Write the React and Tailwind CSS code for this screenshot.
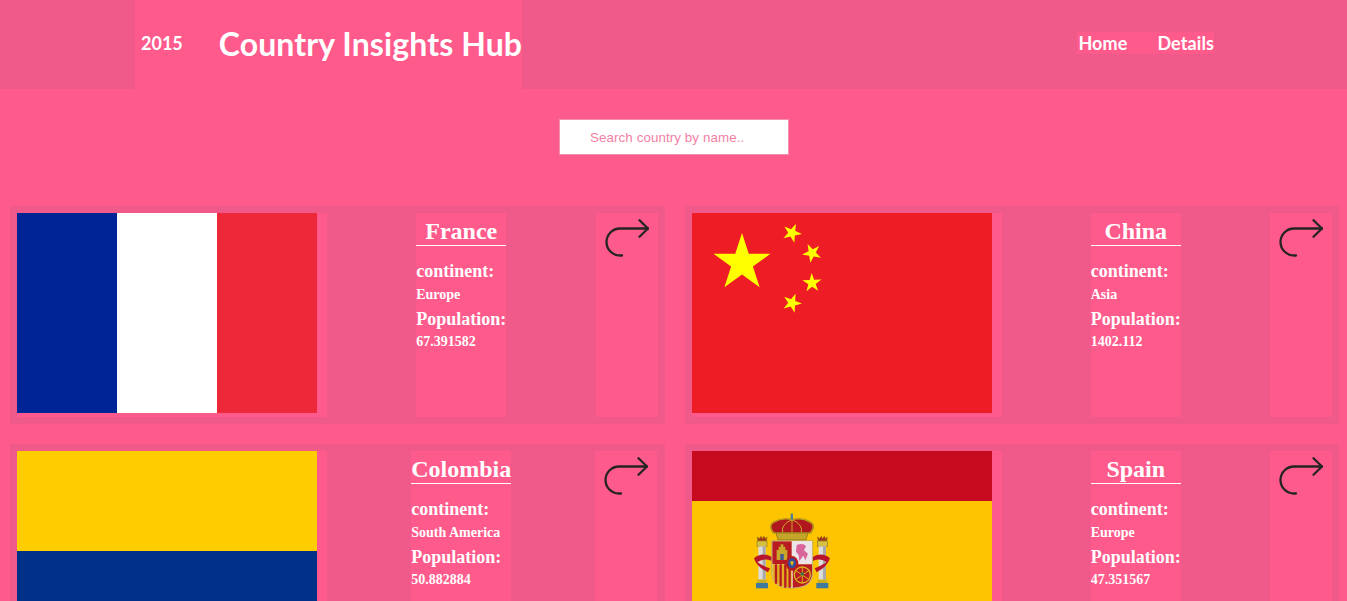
import React from 'react';

const starPoints = (cx, cy, r, rot) => {
  const pts = [];
  for (let i = 0; i < 10; i++) {
    const rad = i % 2 === 0 ? r : r * 0.382;
    const a = rot + (i * Math.PI) / 5;
    pts.push(`${(cx + rad * Math.cos(a)).toFixed(2)},${(cy + rad * Math.sin(a)).toFixed(2)}`);
  }
  return pts.join(' ');
};

const FranceFlag = () => (
  <svg viewBox="0 0 300 200" className="block w-[300px] h-[200px]">
    <rect width="100" height="200" fill="#002395" />
    <rect x="100" width="100" height="200" fill="#ffffff" />
    <rect x="200" width="100" height="200" fill="#ED2939" />
  </svg>
);

const ChinaFlag = () => {
  const small = [[100, 20], [120, 40], [120, 70], [100, 90]];
  return (
    <svg viewBox="0 0 300 200" className="block w-[300px] h-[200px]">
      <rect width="300" height="200" fill="#EE1C25" />
      <polygon points={starPoints(50, 50, 30, -Math.PI / 2)} fill="#FFFF00" />
      {small.map(([x, y]) => (
        <polygon key={`${x}-${y}`} points={starPoints(x, y, 10, Math.atan2(50 - y, 50 - x))} fill="#FFFF00" />
      ))}
    </svg>
  );
};

const ColombiaFlag = () => (
  <svg viewBox="0 0 300 200" className="block w-[300px] h-[200px]">
    <rect width="300" height="100" fill="#FFCD00" />
    <rect y="100" width="300" height="50" fill="#003087" />
    <rect y="150" width="300" height="50" fill="#C8102E" />
  </svg>
);

const Pillar = ({ x }) => (
  <g>
    <path d={`M${x + 3} 108 l-2 -12 l6 5 l5 -7 l4 7 l5 -7 l4 7 l5 -5 l-2 12 z`} fill="#a8321c" stroke="#8a6a10" strokeWidth="2" />
    <rect x={x} y="108" width="30" height="16" fill="#d8c040" stroke="#8a7a20" strokeWidth="2" />
    <rect x={x + 4} y="124" width="22" height="100" fill="#dcdcdc" />
    <rect x={x + 17} y="124" width="9" height="100" fill="#a8a8a8" />
    <rect x={x + 1} y="224" width="28" height="10" fill="#c8b020" />
    <rect x={x - 3} y="234" width="36" height="16" fill="#3f7a9c" />
  </g>
);

const SpainFlag = () => (
  <svg viewBox="0 0 300 200" className="block w-[300px] h-[200px]">
    <rect width="300" height="200" fill="#FFC400" />
    <rect width="300" height="50" fill="#C60B1E" />
    <g transform="translate(48 54) scale(0.3333)">
      <Pillar x={51} />
      <Pillar x={232} />
      <path d="M42 160 Q65 140 96 156 L96 168 Q70 158 52 172 Q72 184 90 190 L84 202 Q50 186 42 160 Z" fill="#b8152a" />
      <path d="M270 160 Q247 140 218 156 L218 168 Q244 158 260 172 Q240 184 224 190 L230 202 Q262 186 270 160 Z" fill="#b8152a" />
      <path d="M100 84 Q84 62 100 52 Q128 36 156 44 Q186 36 212 52 Q228 62 212 84 Z" fill="#b0181e" stroke="#b89a1c" strokeWidth="5" />
      <path d="M128 84 Q122 58 156 44 Q190 58 184 84 M156 44 V84" fill="none" stroke="#c8ac28" strokeWidth="3" />
      <rect x="152" y="26" width="7" height="18" fill="#4d7f90" />
      <path d="M108 84 H204 L198 105 H114 Z" fill="#c4a52a" stroke="#7f6a14" strokeWidth="2" />
      <path d="M95 107 H218 V205 Q218 250 156 250 Q95 250 95 205 Z" fill="#f2ead8" stroke="#a89a50" strokeWidth="2" />
      <path d="M97 109 H155 V177 H97 Z" fill="#b81c20" />
      <path d="M110 165 V135 H116 V125 H122 V118 H130 V125 H136 V135 H142 V165 Z" fill="#c9a72a" />
      <rect x="121" y="147" width="10" height="18" fill="#3a5a9a" />
      <rect x="158" y="109" width="58" height="66" fill="#ece4e8" />
      <path d="M170 120 Q190 112 198 124 L192 136 L204 146 L196 166 L190 152 L178 168 L176 150 L168 140 Z" fill="#d9659a" />
      <path d="M97 178 H155 V247 Q97 250 97 205 Z" fill="#e0b020" />
      <path d="M108 178 V236 M122 178 V244 M136 178 V248 M149 178 V248" stroke="#b81c20" strokeWidth="7" />
      <path d="M158 178 H216 V205 Q216 247 158 248 Z" fill="#b81c20" />
      <circle cx="187" cy="210" r="24" fill="none" stroke="#d8b020" strokeWidth="4" />
      <path d="M165 195 L209 225 M209 195 L165 225 M187 186 V234" stroke="#d8b020" strokeWidth="3" />
      <circle cx="187" cy="207" r="5" fill="#2c7a4a" />
      <ellipse cx="156" cy="175" rx="19" ry="22" fill="#b81c20" />
      <ellipse cx="156" cy="175" rx="12" ry="15" fill="#2a4fa0" />
      <path d="M150 172 Q156 164 162 172 Q158 180 156 184 Q154 180 150 172 Z" fill="#d8b020" />
    </g>
  </svg>
);

const ArrowIcon = () => (
  <svg viewBox="0 0 44 38" fill="none" stroke="#242424" strokeWidth="2.3" strokeLinecap="round" strokeLinejoin="round" className="block w-[44px] h-[38px] ml-[9px] mt-[6px]">
    <path d="M17 36.5H15A13.5 13.5 0 0 1 15 9.5H43" />
    <path d="M34.5 1.2L43 9.5L34.5 17.8" />
  </svg>
);

const countries = [
  { name: 'France', continent: 'Europe', population: '67.391582', Flag: FranceFlag },
  { name: 'China', continent: 'Asia', population: '1402.112', Flag: ChinaFlag },
  { name: 'Colombia', continent: 'South America', population: '50.882884', Flag: ColombiaFlag },
  { name: 'Spain', continent: 'Europe', population: '47.351567', Flag: SpainFlag },
];

const CountryCard = ({ country }) => {
  const { Flag } = country;
  return (
    <div className="flex justify-between h-[218px] p-[7px] bg-[#f05a8a]">
      <div className="w-[310px] h-[204px] bg-[#ff5a8c]">
        <Flag />
      </div>
      <div className="h-[204px] bg-[#ff5a8c] text-white font-bold font-['Liberation_Serif',serif]">
        <h2 className="pt-1 text-[24px] leading-[28px] text-center border-b border-white">{country.name}</h2>
        <p className="mt-[15px] text-[18px] leading-[21px]">continent:</p>
        <p className="mt-[5px] text-[14px] leading-[16px]">{country.continent}</p>
        <p className="mt-[6px] text-[18px] leading-[21px]">Population:</p>
        <p className="mt-[4px] text-[14px] leading-[16px]">{country.population}</p>
      </div>
      <div className="w-[62px] h-[204px] bg-[#ff5a8c]">
        <ArrowIcon />
      </div>
    </div>
  );
};

export default function App() {
  return (
    <div className="h-screen overflow-hidden bg-[#ff5a8c] font-['Lato',sans-serif]">
      <header className="flex items-center justify-between h-[89px] pl-[135px] pr-[133px] bg-[#f05a8a] text-white">
        <div className="flex items-center h-full pb-[2px] bg-[#ff5a8c]">
          <span className="ml-[6px] text-[18px] font-bold">2015</span>
          <h1 className="ml-9 text-[32px] tracking-[0.1px] font-bold">Country Insights Hub</h1>
        </div>
        <nav className="flex gap-[30px] pl-px mb-[3px] bg-[#ff5a8c] text-[18px] tracking-[0.1px] font-bold leading-[22px]">
          <a href="#home">Home</a>
          <a href="#details">Details</a>
        </nav>
      </header>
      <div className="flex justify-center pt-[30px] pb-[51px]">
        <input
          type="text"
          placeholder="Search country by name.."
          className="w-[230px] h-[36px] ml-px pl-[30px] bg-white border border-[#f48fb1] text-[13.33px] tracking-[0.1px] font-['Liberation_Sans',sans-serif] outline-none placeholder:text-[#f27fa6]"
        />
      </div>
      <div className="grid grid-cols-2 gap-5 pl-[10px] pr-2">
        {countries.map((country) => (
          <CountryCard key={country.name} country={country} />
        ))}
      </div>
    </div>
  );
}
